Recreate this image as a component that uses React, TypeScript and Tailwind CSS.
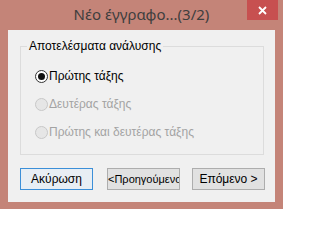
import React from 'react';

const ui = { fontFamily: '"Liberation Sans", Arial, sans-serif' };

function Radio({ label, checked, disabled }: { label: string; checked?: boolean; disabled?: boolean }) {
  return (
    <div className="flex items-center h-[14px]">
      <span
        className={
          'w-[13px] h-[13px] rounded-full border flex items-center justify-center shrink-0 ' +
          (disabled ? 'border-[#c8c8c8] bg-[#e6e6e6]' : 'border-[#333333] bg-white')
        }
      >
        {checked && <span className="w-[7px] h-[7px] rounded-full bg-[#111111]" />}
      </span>
      <span className={'ml-[1px] text-[12px] leading-none ' + (disabled ? 'text-[#a3a3a3]' : 'text-black')}>
        {label}
      </span>
    </div>
  );
}

export default function App() {
  return (
    <div className="w-[283px] h-[209px] bg-[#c48478] flex flex-col overflow-hidden" style={ui}>
      {/* title bar */}
      <div className="relative h-[30px] shrink-0 flex items-center justify-center">
        <span className="text-[15px] text-[#3e3e3e] leading-none -mt-[1px]" style={{ fontFamily: '"Noto Sans", "Open Sans", sans-serif' }}>
          Νέο έγγραφο...(3/2)
        </span>
        <div className="absolute top-0 right-[5px] w-[31px] h-[20px] bg-[#c75050] flex items-center justify-center">
          <svg width="9" height="9" viewBox="0 0 9 9">
            <path d="M1 1 L8 8 M8 1 L1 8" stroke="white" strokeWidth="1.8" />
          </svg>
        </div>
      </div>

      {/* client area */}
      <div className="mx-[8px] h-[172px] bg-[#f0f0f0] flex flex-col pl-[12px] pt-[16px]">
        <div className="relative w-[244px] h-[109px] border border-[#dcdcdc] flex flex-col pl-[14px] pt-[22px] gap-[14px]">
          <span className="absolute -top-[8px] left-[6px] px-[2px] bg-[#f0f0f0] text-[12px] leading-[14px] text-black">
            Αποτελέσματα ανάλυσης
          </span>
          <Radio label="Πρώτης τάξης" checked />
          <Radio label="Δευτέρας τάξης" disabled />
          <Radio label="Πρώτης και δευτέρας τάξης" disabled />
        </div>

        <div className="flex mt-[13px]">
          <button className="w-[73px] h-[22px] border border-[#3c8fd8] bg-[#e8eef4] text-[12px] text-black flex items-center justify-center">
            Ακύρωση
          </button>
          <button className="ml-[14px] w-[73px] h-[22px] border border-[#adadad] bg-[#e1e1e1] text-[11px] text-black flex items-center justify-start overflow-hidden whitespace-nowrap">
            &lt;Προηγούμενο
          </button>
          <button className="ml-[12px] w-[73px] h-[22px] border border-[#adadad] bg-[#e1e1e1] text-[12px] text-black flex items-center justify-center">
            Επόμενο &gt;
          </button>
        </div>
      </div>
    </div>
  );
}
